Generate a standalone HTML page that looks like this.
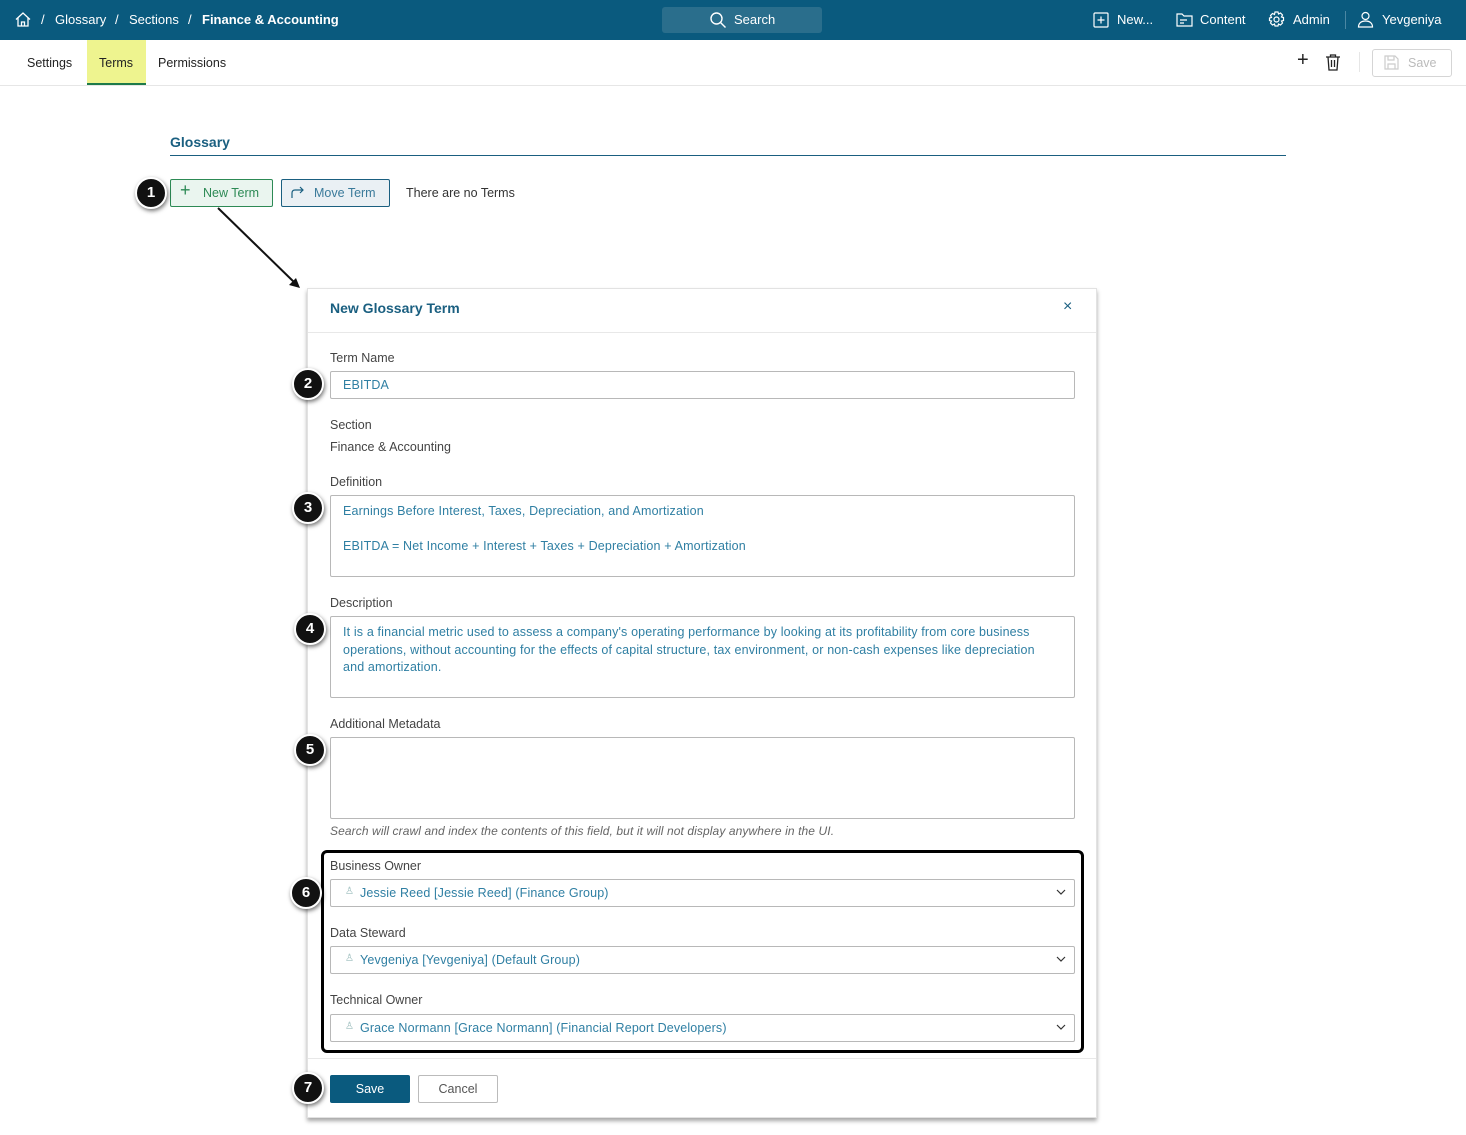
<!DOCTYPE html>
<html><head><meta charset="utf-8"><style>
*{box-sizing:border-box;margin:0;padding:0}
body{width:1466px;height:1135px;position:relative;background:#fff;font-family:"Liberation Sans",sans-serif;font-size:13px;color:#333;overflow:hidden}
.abs{position:absolute}
.top{left:0;top:0;width:1466px;height:40px;background:#0a5a7e;color:#fff}
.top span{position:absolute;top:12px;font-size:13px}
.lbl{position:absolute;font-size:12.5px;color:#444}
.inp{position:absolute;left:330px;width:745px;border:1px solid #b8b8b8;border-radius:2px;background:#fff;color:#2f7fa3;font-size:12.5px;letter-spacing:0.15px}
.badge{position:absolute;width:32px;height:32px;border-radius:50%;background:#111;border:2px solid #fff;box-shadow:1px 2px 4px rgba(0,0,0,.55);color:#fff;font-weight:bold;font-size:15px;text-align:center;line-height:28px}
.sel{height:28px}
.sel .t{position:absolute;left:29px;top:6px}
.sel .u{position:absolute;left:14px;top:6px;color:#9bb;font-size:10px}
.sel svg{position:absolute;right:8px;top:9px}
</style></head><body>
<div class="abs top">
<svg class="abs" style="left:15px;top:12px" width="16" height="15" viewBox="0 0 16 15" fill="none" stroke="#fff" stroke-width="1.3"><path d="M1 7.5L8 1l7 6.5M3 6v8h10V6M6.5 14V10h3v4"/></svg>
<span style="left:41px">/</span><span style="left:55px">Glossary</span><span style="left:115px">/</span><span style="left:129px">Sections</span><span style="left:188px">/</span><span style="left:202px;font-weight:bold">Finance &amp; Accounting</span>
<div class="abs" style="left:662px;top:7px;width:160px;height:26px;background:#2a6e8c;border-radius:3px"></div>
<svg class="abs" style="left:709px;top:11px" width="18" height="18" viewBox="0 0 18 18" fill="none" stroke="#fff" stroke-width="1.4"><circle cx="7.5" cy="7.5" r="5.5"/><path d="M11.5 11.5l5 5"/></svg>
<span style="left:734px">Search</span>
<svg class="abs" style="left:1093px;top:12px" width="16" height="16" viewBox="0 0 16 16" fill="none" stroke="#fff" stroke-width="1.2"><rect x="1" y="1" width="14" height="14" rx="1"/><path d="M8 4.5v7M4.5 8h7"/></svg>
<span style="left:1117px">New...</span>
<svg class="abs" style="left:1176px;top:12px" width="17" height="15" viewBox="0 0 17 15" fill="none" stroke="#fff" stroke-width="1.2"><path d="M1 2h5l2 2h8v10H1z M4 8h7M4 11h4"/></svg>
<span style="left:1200px">Content</span>
<svg class="abs" style="left:1268px;top:11px" width="17" height="17" viewBox="0 0 17 17" fill="none" stroke="#fff" stroke-width="1.2"><circle cx="8.5" cy="8.5" r="2.5"/><path d="M7 1h3l.5 2 2-1 2 2-1 2 2 .5v3l-2 .5 1 2-2 2-2-1-.5 2H7l-.5-2-2 1-2-2 1-2-2-.5V7l2-.5-1-2 2-2 2 1z"/></svg>
<span style="left:1293px">Admin</span>
<div class="abs" style="left:1345px;top:11px;width:1px;height:18px;background:#4b87a3"></div>
<svg class="abs" style="left:1357px;top:11px" width="17" height="17" viewBox="0 0 17 17" fill="none" stroke="#fff" stroke-width="1.2"><circle cx="8.5" cy="5" r="3.5"/><path d="M1.5 16c0-4 3-6 7-6s7 2 7 6z"/></svg>
<span style="left:1382px">Yevgeniya</span>
</div>
<div class="abs" style="left:0;top:40px;width:1466px;height:46px;border-bottom:1px solid #e6e6e6"></div>
<div class="abs" style="left:87px;top:40px;width:59px;height:45px;background:#eef48f;border-bottom:2px solid #1e7a4a"></div>
<div class="lbl" style="left:27px;top:56px;color:#222">Settings</div>
<div class="lbl" style="left:99px;top:56px;color:#222">Terms</div>
<div class="lbl" style="left:158px;top:56px;color:#222">Permissions</div>
<div class="abs" style="left:1297px;top:49px;font-size:20px;color:#222">+</div>
<svg class="abs" style="left:1325px;top:54px" width="16" height="17" viewBox="0 0 16 17" fill="none" stroke="#222" stroke-width="1.3"><path d="M1 3h14M5.5 3V1h5v2M3 3l1 13h8l1-13M6.5 6v7M9.5 6v7"/></svg>
<div class="abs" style="left:1359px;top:52px;width:1px;height:20px;background:#e6e6e6"></div>
<div class="abs" style="left:1372px;top:49px;width:80px;height:28px;border:1px solid #d5d5d5;border-radius:3px;color:#bbb;font-size:12.5px;padding:6px 0 0 35px">Save</div>
<svg class="abs" style="left:1384px;top:55px" width="15" height="15" viewBox="0 0 15 15" fill="none" stroke="#ccc" stroke-width="1.2"><path d="M1 1h10l3 3v10H1z M4 1v4h6V1M4 14V9h7v5"/></svg>
<div class="abs" style="left:170px;top:134px;font-size:14px;font-weight:bold;color:#1a5f80">Glossary</div>
<div class="abs" style="left:170px;top:155px;width:1116px;height:1px;background:#1a5f80"></div>
<div class="abs" style="left:170px;top:179px;width:103px;height:28px;border:1px solid #2d8a55;background:#eaf5ef;border-radius:2px;color:#2d8a55;font-size:12.5px;padding:6px 0 0 32px">New Term</div>
<div class="abs" style="left:180px;top:180px;color:#2d8a55;font-size:18px">+</div>
<div class="abs" style="left:281px;top:179px;width:109px;height:28px;border:1px solid #1a5f80;background:#eaf0f4;border-radius:2px;color:#3a7a9a;font-size:12.5px;padding:6px 0 0 32px">Move Term</div>
<svg class="abs" style="left:291px;top:186px" width="14" height="13" viewBox="0 0 14 13" fill="none" stroke="#1a5f80" stroke-width="1.2"><path d="M1 12V7c0-2 1-3 3-3h8M9 1l3 3-3 3"/></svg>
<div class="lbl" style="left:406px;top:186px;color:#333">There are no Terms</div>
<div class="badge" style="left:135px;top:177px">1</div>
<svg class="abs" style="left:210px;top:200px" width="100" height="95"><path d="M8 8L86 84" stroke="#111" stroke-width="2"/><path d="M90 88l-11-3 7-7z" fill="#111"/></svg>
<div class="abs" style="left:307px;top:288px;width:790px;height:830px;border:1px solid #e2e2e2;box-shadow:0 3px 4px rgba(0,0,0,.35);background:#fff"></div>
<div class="abs" style="left:308px;top:332px;width:788px;height:1px;background:#e8e8e8"></div>
<div class="abs" style="left:330px;top:300px;font-size:14px;font-weight:bold;color:#1a5f80">New Glossary Term</div>
<div class="abs" style="left:1063px;top:298px;font-size:16px;color:#1a5f80">×</div>
<div class="lbl" style="left:330px;top:351px">Term Name</div>
<div class="inp" style="top:371px;height:28px;padding:6px 12px">EBITDA</div>
<div class="lbl" style="left:330px;top:418px">Section</div>
<div class="lbl" style="left:330px;top:440px">Finance &amp; Accounting</div>
<div class="lbl" style="left:330px;top:475px">Definition</div>
<div class="inp" style="top:495px;height:82px;padding:7px 12px;line-height:17.5px">Earnings Before Interest, Taxes, Depreciation, and Amortization<br><br>EBITDA = Net Income + Interest + Taxes + Depreciation + Amortization</div>
<div class="lbl" style="left:330px;top:596px">Description</div>
<div class="inp" style="top:616px;height:82px;padding:7px 30px 7px 12px;line-height:17.5px">It is a financial metric used to assess a company's operating performance by looking at its profitability from core business operations, without accounting for the effects of capital structure, tax environment, or non-cash expenses like depreciation and amortization.</div>
<div class="lbl" style="left:330px;top:717px">Additional Metadata</div>
<div class="inp" style="top:737px;height:82px"></div>
<div class="lbl" style="left:330px;top:824px;font-style:italic;color:#666;font-size:12px;letter-spacing:0.1px">Search will crawl and index the contents of this field, but it will not display anywhere in the UI.</div>
<div class="abs" style="left:321px;top:850px;width:763px;height:203px;border:3px solid #000;border-radius:6px"></div>
<div class="lbl" style="left:330px;top:859px">Business Owner</div>
<div class="inp sel" style="top:879px"><span class="u">♙</span><span class="t">Jessie Reed [Jessie Reed] (Finance Group)</span><svg width="10" height="6" viewBox="0 0 10 6" fill="none" stroke="#333" stroke-width="1.2"><path d="M1 1l4 4 4-4"/></svg></div>
<div class="lbl" style="left:330px;top:926px">Data Steward</div>
<div class="inp sel" style="top:946px"><span class="u">♙</span><span class="t">Yevgeniya [Yevgeniya] (Default Group)</span><svg width="10" height="6" viewBox="0 0 10 6" fill="none" stroke="#333" stroke-width="1.2"><path d="M1 1l4 4 4-4"/></svg></div>
<div class="lbl" style="left:330px;top:993px">Technical Owner</div>
<div class="inp sel" style="top:1014px"><span class="u">♙</span><span class="t">Grace Normann [Grace Normann] (Financial Report Developers)</span><svg width="10" height="6" viewBox="0 0 10 6" fill="none" stroke="#333" stroke-width="1.2"><path d="M1 1l4 4 4-4"/></svg></div>
<div class="abs" style="left:308px;top:1058px;width:788px;height:1px;background:#e8e8e8"></div>
<div class="abs" style="left:330px;top:1075px;width:80px;height:28px;background:#0a5a7e;border-radius:2px;color:#fff;text-align:center;line-height:28px;font-size:12.5px">Save</div>
<div class="abs" style="left:418px;top:1075px;width:80px;height:28px;border:1px solid #bbb;border-radius:2px;color:#555;text-align:center;line-height:26px;font-size:12.5px">Cancel</div>
<div class="badge" style="left:292px;top:368px">2</div>
<div class="badge" style="left:292px;top:492px">3</div>
<div class="badge" style="left:294px;top:613px">4</div>
<div class="badge" style="left:294px;top:734px">5</div>
<div class="badge" style="left:290px;top:877px">6</div>
<div class="badge" style="left:292px;top:1072px">7</div>
</body></html>
